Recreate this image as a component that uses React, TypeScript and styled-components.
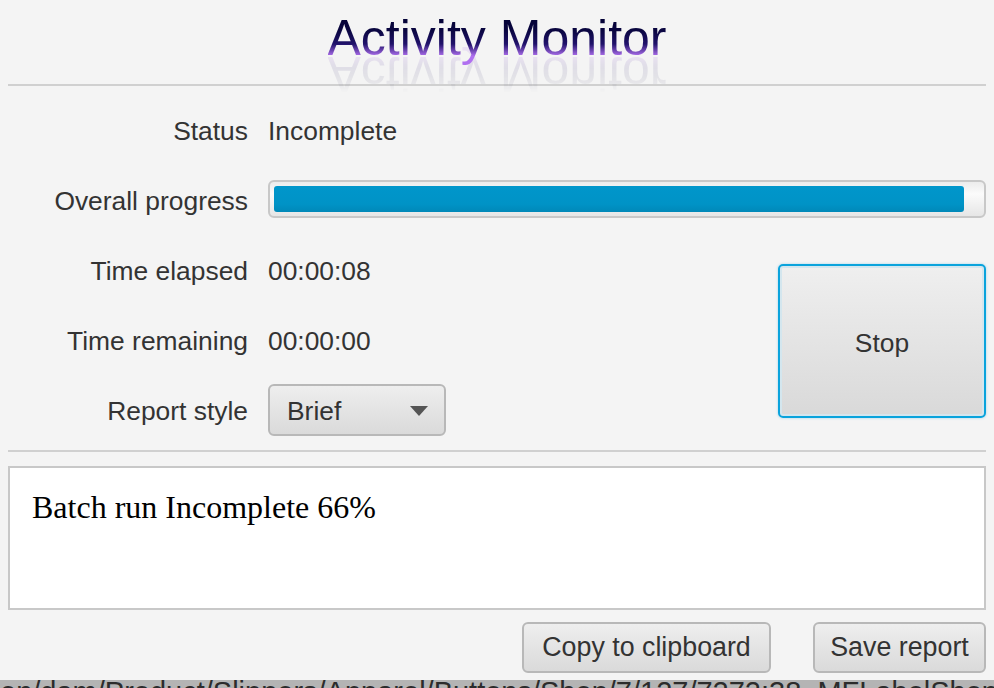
import styled, { createGlobalStyle } from "styled-components";

const GlobalStyle = createGlobalStyle`
  html, body {
    margin: 0;
    padding: 0;
    width: 994px;
    height: 688px;
    overflow: hidden;
    background: #f4f4f4;
  }
  * {
    box-sizing: border-box;
  }
`;

const Window = styled.div`
  width: 994px;
  height: 688px;
  display: flex;
  flex-direction: column;
  overflow: hidden;
  background: #f4f4f4;
  font-family: "Liberation Sans", Arial, sans-serif;
  font-size: 26.4px;
  color: #333;
`;

const Header = styled.header`
  height: 86px;
  flex: none;
  margin: 0 8px;
  border-bottom: 2px solid #d0d0d0;
  display: flex;
  justify-content: center;
  padding-top: 11px;
`;

const Title = styled.h1`
  margin: 0;
  height: 55px;
  font-size: 50px;
  line-height: 55px;
  font-weight: 400;
  background: linear-gradient(to bottom, #000030 0%, #0a0640 35%, #20126a 60%, #b070f0 82%, #b070f0 100%);
  -webkit-background-clip: text;
  background-clip: text;
  color: transparent;
  filter: blur(0.4px);
  -webkit-box-reflect: below -20px linear-gradient(to bottom, transparent 15%, rgba(0, 0, 0, 0.06) 35%, rgba(0, 0, 0, 0.16) 100%);
`;

const Form = styled.div`
  display: grid;
  flex: none;
  grid-template-columns: 240px 530px 208px;
  grid-auto-rows: 70px;
  padding: 10px 8px 0;
  height: 364px;
`;

const Label = styled.div`
  display: flex;
  align-items: center;
  justify-content: flex-end;
`;

const Value = styled.div`
  display: flex;
  align-items: center;
  padding-left: 20px;
  grid-column: ${({ $wide }: { $wide?: boolean }) => ($wide ? "span 2" : "auto")};
`;

const ProgressTrack = styled.div`
  width: 100%;
  height: 38px;
  margin-top: -4px;
  border: 2px solid #c8c8c8;
  border-radius: 6px;
  background: linear-gradient(to bottom, #ececec, #fbfbfb 35%, #e6e6e6);
  padding: 4px;
`;

const ProgressBar = styled.div`
  height: 100%;
  border-radius: 3px;
  background: linear-gradient(to bottom, #0096cb, #0093c6 70%, #0088b8);
`;

const StopSlot = styled.div`
  grid-column: 3;
  grid-row: 3 / span 3;
  padding-top: 28px;
`;

const StopButton = styled.button`
  width: 208px;
  height: 154px;
  padding: 4px 0 0;
  border: 2px solid #0aa3dc;
  border-radius: 5px;
  box-shadow: 0 0 2px 1px #cfe6f0, inset 0 0 0 2px #d4e6ee;
  background: linear-gradient(to bottom, #efefef, #d9d9d9);
  font: inherit;
  color: inherit;
`;

const Select = styled.div`
  width: 178px;
  height: 52px;
  margin-top: -2px;
  display: flex;
  align-items: center;
  justify-content: space-between;
  padding: 2px 16px 0 17px;
  border: 2px solid #b8b8b8;
  border-radius: 6px;
  background: linear-gradient(to bottom, #eeeeee, #dadada);
`;

const Caret = styled.span`
  width: 0;
  height: 0;
  border-left: 9px solid transparent;
  border-right: 9px solid transparent;
  border-top: 10px solid #555;
`;

const Divider = styled.hr`
  margin: 0 8px;
  height: 2px;
  border: none;
  background: #d0d0d0;
  flex: none;
`;

const Report = styled.div`
  height: 144px;
  flex: none;
  margin: 14px 8px 0;
  padding: 21px 22px;
  border: 2px solid #c8c8c8;
  background: #fff;
  font-family: "Liberation Serif", "Times New Roman", serif;
  font-size: 32px;
  line-height: 36px;
  color: #000;
`;

const Actions = styled.div`
  display: flex;
  flex: none;
  justify-content: flex-end;
  gap: 42px;
  margin: 12px 8px 0;
`;

const ActionButton = styled.button<{ $width: number }>`
  width: ${({ $width }) => $width}px;
  height: 51px;
  padding: 0;
  border: 2px solid #b8b8b8;
  border-radius: 6px;
  background: linear-gradient(to bottom, #eeeeee, #dadada);
  font: inherit;
  font-size: 26.8px;
  color: inherit;
`;

// sliver of whatever sits behind the window, cut off by the screenshot
const BehindStrip = styled.div`
  margin-top: auto;
  height: 8px;
  flex: none;
  overflow: hidden;
  white-space: nowrap;
  background: #b4b4b4;
  color: #2c2c2c;
  font-size: 29px;
  line-height: 30px;
`;

const BehindText = styled.div`
  margin-top: -3px;
`;

const rows = [
  { label: "Status", value: "Incomplete" },
  { label: "Time elapsed", value: "00:00:08" },
  { label: "Time remaining", value: "00:00:00" },
];

export default function App() {
  return (
    <Window>
      <GlobalStyle />
      <Header>
        <Title>Activity Monitor</Title>
      </Header>
      <Form>
        <Label>{rows[0].label}</Label>
        <Value $wide>{rows[0].value}</Value>
        <Label>Overall progress</Label>
        <Value $wide>
          <ProgressTrack>
            <ProgressBar style={{ width: `${(690 / 706) * 100}%` }} />
          </ProgressTrack>
        </Value>
        <Label>{rows[1].label}</Label>
        <Value>{rows[1].value}</Value>
        <StopSlot>
          <StopButton>Stop</StopButton>
        </StopSlot>
        <Label>{rows[2].label}</Label>
        <Value>{rows[2].value}</Value>
        <Label>Report style</Label>
        <Value>
          <Select>
            Brief
            <Caret />
          </Select>
        </Value>
      </Form>
      <Divider />
      <Report>Batch run Incomplete 66%</Report>
      <Actions>
        <ActionButton $width={249}>Copy to clipboard</ActionButton>
        <ActionButton $width={173}>Save report</ActionButton>
      </Actions>
      <BehindStrip>
        <BehindText>en/dam/Product/Slippers/Apparel/Buttons/Shop/7/127/7272:38_MFLabelShop</BehindText>
      </BehindStrip>
    </Window>
  );
}
